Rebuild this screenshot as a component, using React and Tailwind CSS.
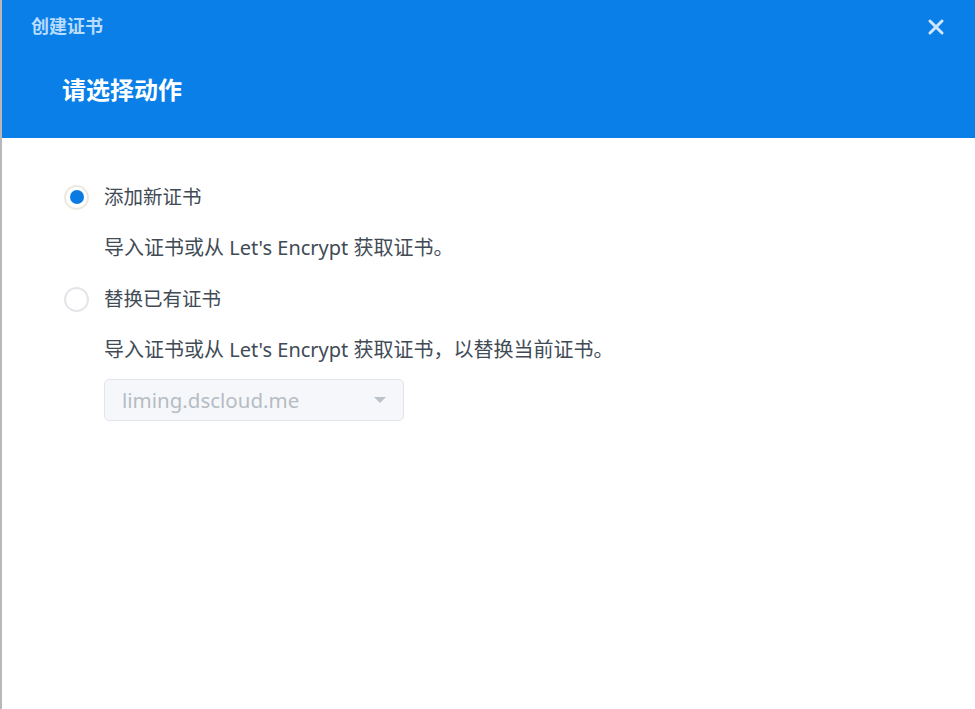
import React from "react";

function Radio({ checked }) {
  return (
    <span
      className={
        "flex h-[25px] w-[25px] shrink-0 items-center justify-center rounded-full border-2 bg-white " +
        (checked ? "border-[#ece9e2]" : "border-[#e3e5e8]")
      }
    >
      {checked && <span className="h-[14px] w-[14px] rounded-full bg-[#0b7be3]" />}
    </span>
  );
}

export default function App() {
  return (
    <div
      className="flex h-[709px] w-[975px] overflow-hidden bg-white"
      style={{ fontFamily: '"Noto Sans", "Noto Sans CJK SC", sans-serif' }}
    >
      <div className="w-[2px] shrink-0 bg-[#b8b8b8]" />
      <div className="flex flex-1 flex-col">
        <div className="relative h-[138px] shrink-0 bg-[#0a7fe8]">
          <div className="pl-[29px] pt-[13px] text-[18px] font-bold leading-[26px] text-[#b9dcff]">
            创建证书
          </div>
          <div className="pl-[60px] pt-[36px] text-[24px] font-bold leading-[30px] text-white">
            请选择动作
          </div>
          <button className="absolute right-[31px] top-[19px] flex h-[16px] w-[16px] items-center justify-center">
            <svg width="16" height="16" viewBox="0 0 16 16">
              <path d="M2 2 L14 14 M14 2 L2 14" stroke="#cfe6fc" strokeWidth="3" strokeLinecap="round" />
            </svg>
          </button>
        </div>
        <div className="flex flex-col pl-[62px] pt-[46px] text-[#414b55]">
          <div className="flex h-[26px] items-center gap-[15px]">
            <Radio checked />
            <span className="text-[19.5px] leading-[26px]">添加新证书</span>
          </div>
          <div className="mt-[25px] h-[26px] pl-[40px] text-[20px] leading-[26px]">
            导入证书或从 Let's Encrypt 获取证书。
          </div>
          <div className="mt-[25px] flex h-[26px] items-center gap-[15px]">
            <Radio />
            <span className="text-[19.5px] leading-[26px]">替换已有证书</span>
          </div>
          <div className="mt-[25px] h-[26px] pl-[40px] text-[20px] leading-[26px]">
            导入证书或从 Let's Encrypt 获取证书，以替换当前证书。
          </div>
          <div className="ml-[40px] mt-[16px] flex h-[42px] w-[300px] items-center justify-between rounded-[5px] border border-[#e1e5ea] bg-[#f5f7fa] pl-[17px] pr-[17px]">
            <span className="text-[20.5px] text-[#b6bcc4]">liming.dscloud.me</span>
            <svg width="12" height="7" viewBox="0 0 12 7">
              <path d="M0 0 L12 0 L6 6 Z" fill="#bcc2ca" />
            </svg>
          </div>
        </div>
      </div>
    </div>
  );
}
